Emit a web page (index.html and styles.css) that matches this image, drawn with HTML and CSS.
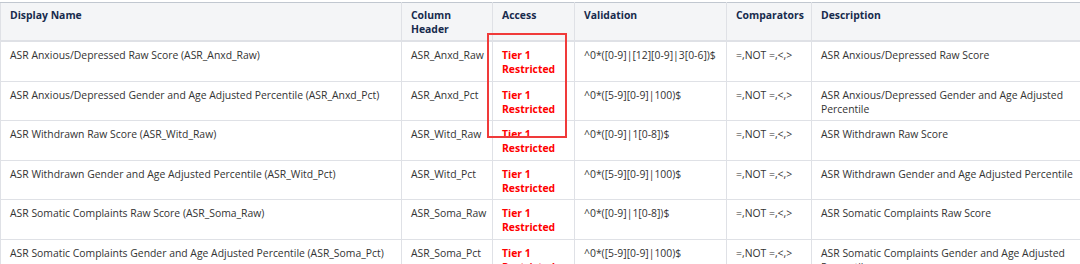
FILE: index.html
```html
<!DOCTYPE html>
<html lang="en">
  <head>
    <meta charset="UTF-8" />
    <title>ASR Variables</title>
    <link rel="stylesheet" href="styles.css">
  </head>
  <body>
    <div class="wrap">
      <table class="vars">
        <colgroup>
          <col class="c-name" />
          <col class="c-col" />
          <col class="c-access" />
          <col class="c-valid" />
          <col class="c-comp" />
          <col class="c-desc" />
        </colgroup>
        <thead>
          <tr>
            <th>Display Name</th>
            <th>Column Header</th>
            <th>Access</th>
            <th>Validation</th>
            <th>Comparators</th>
            <th>Description</th>
          </tr>
        </thead>
        <tbody>
          <tr>
            <td class="one">ASR Anxious/Depressed Raw Score (ASR_Anxd_Raw)</td>
            <td class="one">ASR_Anxd_Raw</td>
            <td class="tier">Tier 1<br />Restricted</td>
            <td class="one">^0*([0-9]|[12][0-9]|3[0-6])$</td>
            <td class="one">=,NOT =,&lt;,&gt;</td>
            <td>ASR Anxious/Depressed Raw Score</td>
          </tr>
          <tr>
            <td class="one">ASR Anxious/Depressed Gender and Age Adjusted Percentile (ASR_Anxd_Pct)</td>
            <td class="one">ASR_Anxd_Pct</td>
            <td class="tier">Tier 1<br />Restricted</td>
            <td class="one">^0*([5-9][0-9]|100)$</td>
            <td class="one">=,NOT =,&lt;,&gt;</td>
            <td>ASR Anxious/Depressed Gender and Age Adjusted Percentile</td>
          </tr>
          <tr>
            <td class="one">ASR Withdrawn Raw Score (ASR_Witd_Raw)</td>
            <td class="one">ASR_Witd_Raw</td>
            <td class="tier">Tier 1<br />Restricted</td>
            <td class="one">^0*([0-9]|1[0-8])$</td>
            <td class="one">=,NOT =,&lt;,&gt;</td>
            <td>ASR Withdrawn Raw Score</td>
          </tr>
          <tr>
            <td class="one">ASR Withdrawn Gender and Age Adjusted Percentile (ASR_Witd_Pct)</td>
            <td class="one">ASR_Witd_Pct</td>
            <td class="tier">Tier 1<br />Restricted</td>
            <td class="one">^0*([5-9][0-9]|100)$</td>
            <td class="one">=,NOT =,&lt;,&gt;</td>
            <td>ASR Withdrawn Gender and Age Adjusted Percentile</td>
          </tr>
          <tr>
            <td class="one">ASR Somatic Complaints Raw Score (ASR_Soma_Raw)</td>
            <td class="one">ASR_Soma_Raw</td>
            <td class="tier">Tier 1<br />Restricted</td>
            <td class="one">^0*([0-9]|1[0-8])$</td>
            <td class="one">=,NOT =,&lt;,&gt;</td>
            <td>ASR Somatic Complaints Raw Score</td>
          </tr>
          <tr>
            <td class="one">ASR Somatic Complaints Gender and Age Adjusted Percentile (ASR_Soma_Pct)</td>
            <td class="one">ASR_Soma_Pct</td>
            <td class="tier">Tier 1<br />Restricted</td>
            <td class="one">^0*([5-9][0-9]|100)$</td>
            <td class="one">=,NOT =,&lt;,&gt;</td>
            <td>ASR Somatic Complaints Gender and Age Adjusted Percentile</td>
          </tr>
        </tbody>
      </table>

      <!-- annotation box drawn over the Access column -->
      <div class="highlight"></div>
    </div>
  </body>
</html>
```

FILE: styles.css
```css
* {
  margin: 0;
  padding: 0;
  box-sizing: border-box;
}

body {
  font-family: "Open Sans", "Noto Sans", sans-serif;
  font-size: 10.4px;
  color: #333;
  background: #fff;
  overflow: hidden;
}

.wrap {
  position: relative;
  padding-top: 2px;
  width: 1200px;
}

.vars {
  border-collapse: collapse;
  table-layout: fixed;
  width: 1100px;
}

.c-name { width: 401px; }
.c-col { width: 91px; }
.c-access { width: 82px; }
.c-valid { width: 152px; }
.c-comp { width: 85px; }
.c-desc { width: 289px; }

.vars th,
.vars td {
  border: 1px solid #dfe1e6;
  padding: 6px 9px 4.5px;
  line-height: 14px;
  text-align: left;
  vertical-align: top;
}

.vars th {
  background: #f4f5f7;
  color: #172b4d;
  font-weight: 700;
  padding: 5px 9px 4px;
  border-top-color: #c1c7d0;
  border-bottom: 2px solid #dfe1e6;
}

.vars td.one {
  white-space: nowrap;
}

.vars td.tier {
  color: #ff0000;
  font-weight: 700;
}

.highlight {
  position: absolute;
  left: 487px;
  top: 33px;
  width: 80px;
  height: 105px;
  border: 2px solid #f03a3a;
}
```
